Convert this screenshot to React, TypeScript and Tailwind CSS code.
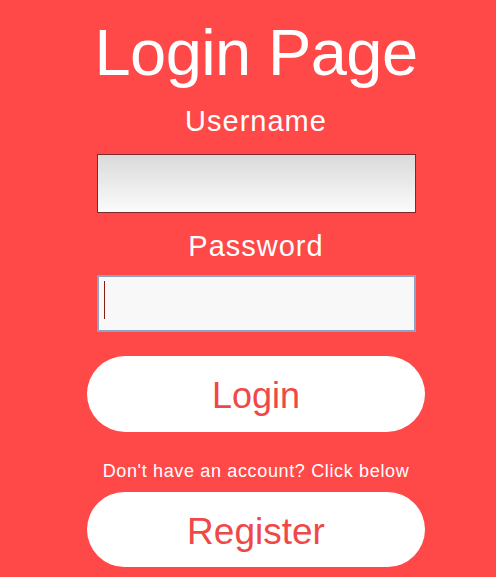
export default function App() {
  return (
    <div className="min-h-[577px] w-full bg-[#ff4848] font-['Liberation_Sans',Arial,sans-serif]">
      <div className="flex flex-col items-center pl-4 pt-[20px]">
        <h1 className="text-[65px] leading-[65px] tracking-[-0.6px] text-white">Login Page</h1>

        <label className="mt-[22px] text-[29px] leading-[28px] tracking-[1px] text-white">
          Username
        </label>
        <input
          type="text"
          className="mt-[19px] h-[59px] w-[319px] border border-[#7a2a2a] bg-gradient-to-b from-[#dadada] to-[#fbfbfb] outline-none"
        />

        <label className="mt-[19px] text-[29px] leading-[28px] tracking-[1px] text-white">
          Password
        </label>
        <div className="relative mt-[15px] h-[57px] w-[319px] border-2 border-[#8fa3c6] bg-[#f8f8f8]">
          <input type="password" className="h-full w-full bg-transparent outline-none" />
          <span className="absolute left-[5px] top-[4px] h-[38px] w-px bg-[#8b1a1a]" />
        </div>

        <button className="mt-[24px] flex h-[76px] w-[338px] items-center justify-center rounded-full bg-white pt-1 text-[36px] text-[#f04848]">
          Login
        </button>

        <p className="mt-[30px] text-[18px] leading-[18px] tracking-[0.65px] text-white">
          Don't have an account? Click below
        </p>

        <button className="mt-[12px] flex h-[75px] w-[338px] items-center justify-center rounded-full bg-white pt-1 text-[37px] text-[#f04848]">
          Register
        </button>
      </div>
    </div>
  );
}
